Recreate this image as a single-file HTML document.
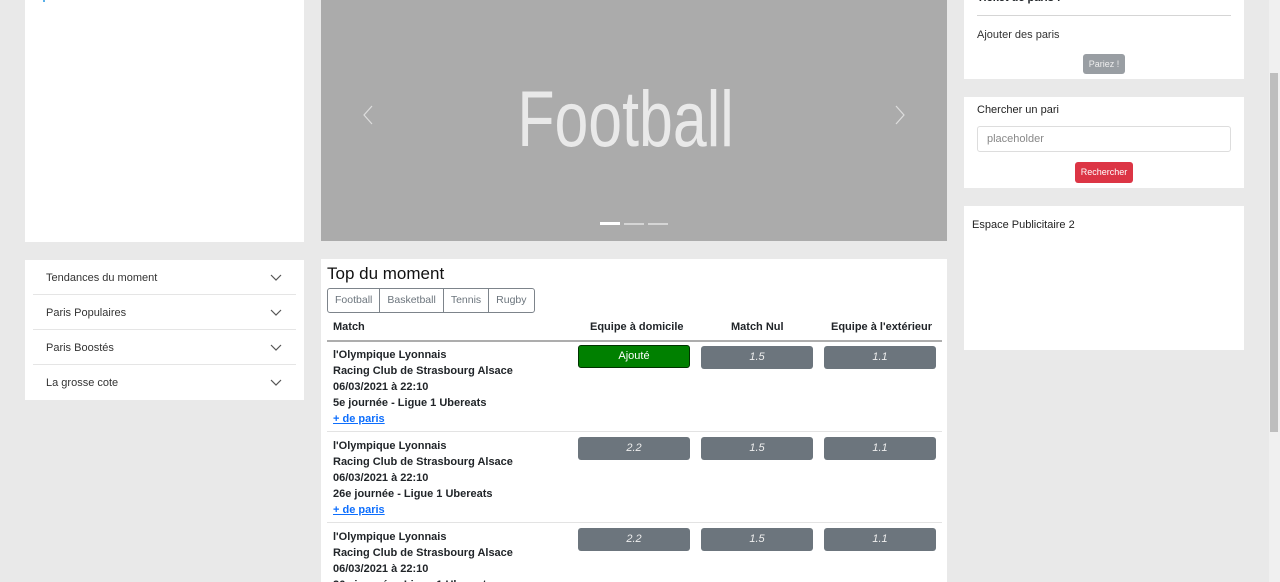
<!DOCTYPE html>
<html style="overflow:hidden;height:582px"><head><meta charset="utf-8"><style>
*{box-sizing:border-box;margin:0;padding:0}
body{width:1280px;height:582px;overflow:hidden;background:#e9e9e9;font-family:"Liberation Sans",sans-serif;position:relative;color:#212529}
.p{position:absolute;background:#fff}
.acc{font-size:11px;color:#333}
.acc div{position:absolute;left:8px;width:263px;height:35px;border-bottom:1px solid #e5e5e5;padding:12px 0 0 13px}
.acc div:last-child{border-bottom:none}
.chev{position:absolute;right:14px;top:14px}
.btn{position:absolute;width:112px;height:23px;background:#6c757d;border-radius:3px;color:#eee;font-size:11px;font-style:italic;text-align:center;line-height:23px}
.row{position:absolute;left:6px;width:615px;height:91px;border-bottom:1px solid #e3e3e3;font-size:11px;font-weight:bold;line-height:16px;padding:6px 0 0 6px}
.row a{color:#0d6efd;text-decoration:underline}
</style></head><body>
<div class="p" style="left:25px;top:0;width:279px;height:242px"><div style="position:absolute;left:18px;top:0;width:2px;height:2px;background:#5ab0e8"></div></div>
<div class="p acc" style="left:25px;top:260px;width:279px;height:140px">
<div style="top:0">Tendances du moment<svg class="chev" width="12" height="8" viewBox="0 0 12 8"><path d="M1 1l5 5 5-5" fill="none" stroke="#555" stroke-width="1.2"/></svg></div>
<div style="top:35px">Paris Populaires<svg class="chev" width="12" height="8" viewBox="0 0 12 8"><path d="M1 1l5 5 5-5" fill="none" stroke="#555" stroke-width="1.2"/></svg></div>
<div style="top:70px">Paris Boostés<svg class="chev" width="12" height="8" viewBox="0 0 12 8"><path d="M1 1l5 5 5-5" fill="none" stroke="#555" stroke-width="1.2"/></svg></div>
<div style="top:105px">La grosse cote<svg class="chev" width="12" height="8" viewBox="0 0 12 8"><path d="M1 1l5 5 5-5" fill="none" stroke="#555" stroke-width="1.2"/></svg></div>
</div>
<div style="position:absolute;left:321px;top:0;width:626px;height:241px;background:#ababab">
<div style="position:absolute;left:-8px;width:626px;top:71px;text-align:center;font-size:79px;color:#e9e9e9;line-height:96px"><span style="display:inline-block;transform:scaleX(0.77)">Football</span></div>
<svg style="position:absolute;left:42px;top:105px" width="10" height="20" viewBox="0 0 10 20"><path d="M9 1L1 10l8 9" fill="none" stroke="#ddd" stroke-width="1.2"/></svg>
<svg style="position:absolute;left:574px;top:105px" width="10" height="20" viewBox="0 0 10 20"><path d="M1 1l8 9-8 9" fill="none" stroke="#ddd" stroke-width="1.2"/></svg>
<div style="position:absolute;left:279px;top:222px;width:20px;height:3px;background:#fff"></div>
<div style="position:absolute;left:303px;top:223px;width:20px;height:2px;background:#d5d5d5"></div>
<div style="position:absolute;left:327px;top:223px;width:20px;height:2px;background:#d5d5d5"></div>
</div>
<div class="p" style="left:321px;top:259px;width:626px;height:323px;overflow:hidden">
<div style="position:absolute;left:6px;top:5px;font-size:17px;color:#111">Top du moment</div>
<div style="position:absolute;left:6px;top:29px;height:25px;border:1px solid #7d848b;border-radius:3px;display:flex;font-size:10.5px;color:#6c757d;line-height:23px">
<span style="padding:0 7px;border-right:1px solid #7d848b">Football</span><span style="padding:0 7px;border-right:1px solid #7d848b">Basketball</span><span style="padding:0 7px;border-right:1px solid #7d848b">Tennis</span><span style="padding:0 7px">Rugby</span></div>
<div style="position:absolute;left:6px;top:62px;width:615px;height:21px;border-bottom:2px solid #adadad;font-size:11px;font-weight:bold">
<span style="position:absolute;left:6px">Match</span><span style="position:absolute;left:263px">Equipe à domicile</span><span style="position:absolute;left:404px">Match Nul</span><span style="position:absolute;left:504px">Equipe à l'extérieur</span></div>
<div class="row" style="top:82px">l'Olympique Lyonnais<br>Racing Club de Strasbourg Alsace<br>06/03/2021 à 22:10<br>5e journée - Ligue 1 Ubereats<br><a>+ de paris</a></div>
<div class="row" style="top:173px">l'Olympique Lyonnais<br>Racing Club de Strasbourg Alsace<br>06/03/2021 à 22:10<br>26e journée - Ligue 1 Ubereats<br><a>+ de paris</a></div>
<div class="row" style="top:264px">l'Olympique Lyonnais<br>Racing Club de Strasbourg Alsace<br>06/03/2021 à 22:10<br>26e journée - Ligue 1 Ubereats</div>
<div class="btn" style="left:257px;top:86px;background:#008000;border:1px solid #003300;font-style:normal;color:#fff;line-height:21px">Ajouté</div>
<div class="btn" style="left:380px;top:87px">1.5</div><div class="btn" style="left:503px;top:87px">1.1</div>
<div class="btn" style="left:257px;top:178px">2.2</div><div class="btn" style="left:380px;top:178px">1.5</div><div class="btn" style="left:503px;top:178px">1.1</div>
<div class="btn" style="left:257px;top:269px">2.2</div><div class="btn" style="left:380px;top:269px">1.5</div><div class="btn" style="left:503px;top:269px">1.1</div>
</div>
<div class="p" style="left:964px;top:0;width:280px;height:79px">
<div style="position:absolute;left:13px;top:-8px;font-size:11px;font-weight:bold">Ticket de paris :</div>
<div style="position:absolute;left:13px;top:15px;width:254px;border-top:1px solid #d5d5d5"></div>
<div style="position:absolute;left:13px;top:29px;font-size:11px;color:#333">Ajouter des paris</div>
<div style="position:absolute;left:119px;top:54px;width:42px;height:20px;background:#999ea3;border-radius:3px;color:#eee;font-size:9px;text-align:center;line-height:20px">Pariez !</div>
</div>
<div class="p" style="left:964px;top:97px;width:280px;height:91px">
<div style="position:absolute;left:13px;top:7px;font-size:11px;color:#222">Chercher un pari</div>
<div style="position:absolute;left:13px;top:29px;width:254px;height:26px;border:1px solid #ddd;border-radius:3px;font-size:11px;color:#888;padding:6px 9px">placeholder</div>
<div style="position:absolute;left:111px;top:65px;width:58px;height:21px;background:#dc3545;border-radius:3px;color:#fff;font-size:9px;text-align:center;line-height:21px">Rechercher</div>
</div>
<div class="p" style="left:964px;top:206px;width:280px;height:144px">
<div style="position:absolute;left:8px;top:13px;font-size:11px;color:#222">Espace Publicitaire 2</div>
</div>
<div style="position:absolute;left:1269px;top:0;width:11px;height:582px;background:#f0f0f0"></div>
<div style="position:absolute;left:1270px;top:73px;width:8px;height:359px;background:#bebebe"></div>
</body></html>
